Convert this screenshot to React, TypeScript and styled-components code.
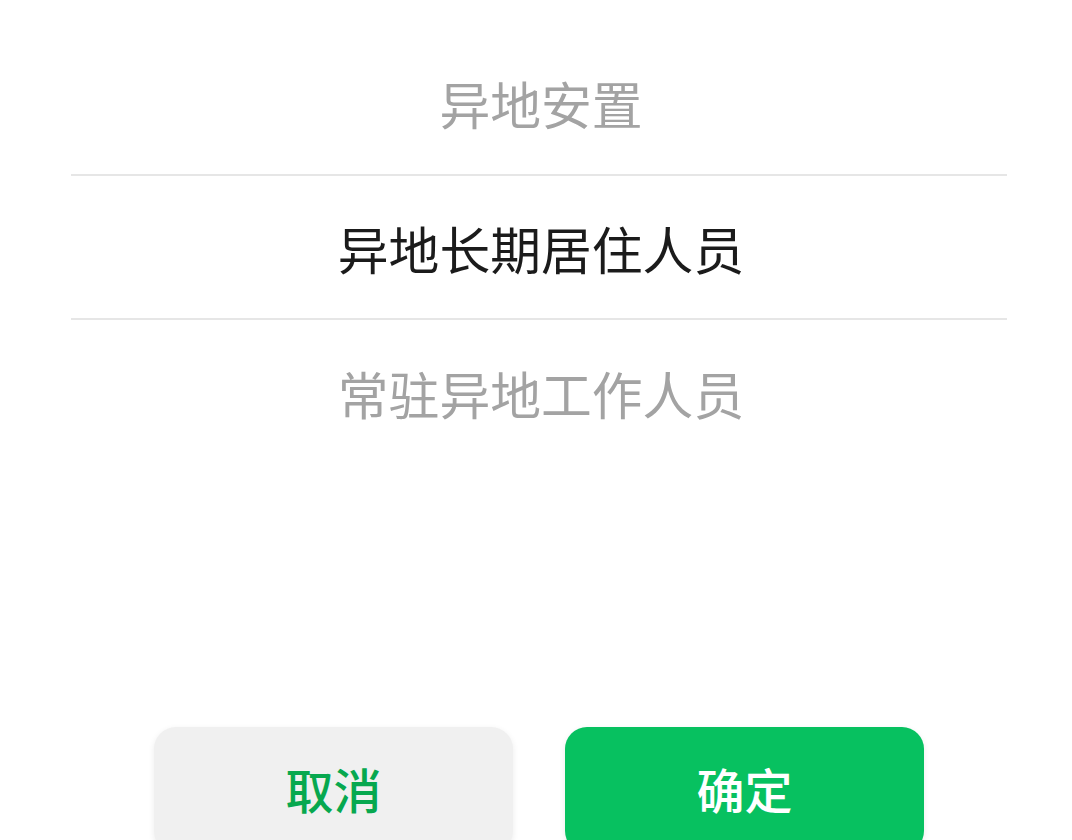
import React from "react";
import styled, { createGlobalStyle } from "styled-components";

const GlobalStyle = createGlobalStyle`
  html, body {
    margin: 0;
    padding: 0;
    background: #ffffff;
  }
  body {
    font-family: "Noto Sans CJK SC", "Noto Sans", sans-serif;
    overflow: hidden;
  }
`;

const options = [
  { label: "异地安置", active: false },
  { label: "异地长期居住人员", active: true },
  { label: "常驻异地工作人员", active: false },
];

const App = () => {
  return (
    <>
      <GlobalStyle />
      <Sheet>
        <Picker>
          <Track>
            {options.map((o, i) => (
              <Option key={i} $active={o.active}>
                {o.label}
              </Option>
            ))}
          </Track>
          <Highlight />
        </Picker>
        <Footer>
          <Button $primary={false}>取消</Button>
          <Button $primary>确定</Button>
        </Footer>
      </Sheet>
    </>
  );
};

export default App;

const Sheet = styled.div`
  width: 1072px;
  height: 840px;
  box-sizing: border-box;
  padding: 29px 65px 0 71px;
  display: flex;
  flex-direction: column;
`;

const Picker = styled.div`
  position: relative;
  height: 435px;
`;

const Track = styled.div`
  display: flex;
  flex-direction: column;
`;

const Option = styled.div<{ $active: boolean }>`
  height: 145px;
  display: flex;
  align-items: center;
  justify-content: center;
  font-size: 50.8px;
  line-height: 1;
  color: ${(p) => (p.$active ? "#1b1b1b" : "#a3a3a3")};
  padding-top: 3px;
  padding-left: 4px;
  box-sizing: border-box;
`;

const Highlight = styled.div`
  position: absolute;
  left: 0;
  right: 0;
  top: 145px;
  height: 146px;
  border-top: 2px solid #e6e6e6;
  border-bottom: 2px solid #e6e6e6;
  box-sizing: border-box;
  pointer-events: none;
`;

const Footer = styled.div`
  margin-top: 263px;
  display: flex;
  justify-content: center;
  gap: 52px;
`;

const Button = styled.button<{ $primary: boolean }>`
  width: 359px;
  height: 126px;
  border: 0;
  border-radius: 22px;
  font-family: "Noto Sans CJK SC", sans-serif;
  font-size: 48px;
  font-weight: 500;
  padding: 0 0 4px;
  background: ${(p) => (p.$primary ? "#07c160" : "#f0f0f0")};
  color: ${(p) => (p.$primary ? "#ffffff" : "#07a84f")};
  box-shadow: 0 2px 6px rgba(0, 0, 0, 0.08);
  flex-shrink: 0;
`;
